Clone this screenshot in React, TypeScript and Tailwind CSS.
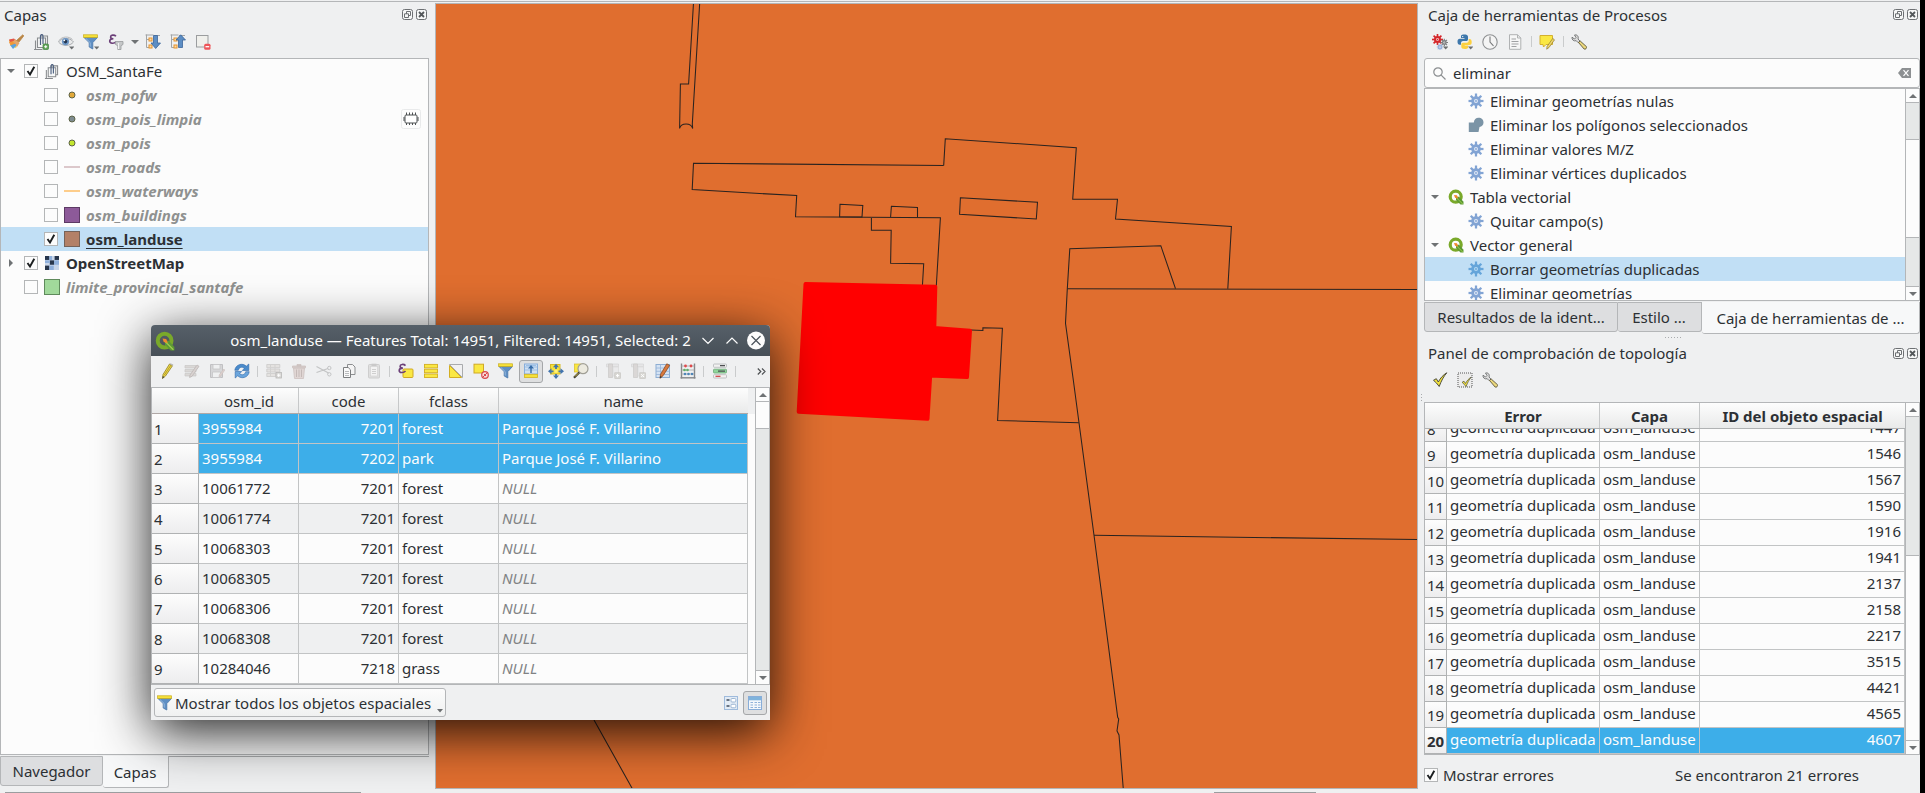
import React, { ReactNode } from "react";

/* ---------- icon primitives ---------- */

function Ico({ children, size = 16, className = "" }: { children: ReactNode; size?: number; className?: string }) {
  return (
    <svg viewBox="0 0 16 16" width={size} height={size} className={`shrink-0 ${className}`}>
      {children}
    </svg>
  );
}

const DropMark = () => <path d="M11 12.6h5.4L13.7 15.4z" fill="#6b6e70" />;

const funnelShape = (
  <g>
    <path d="M1 3.5h13.5L9.8 8.6V15L6.2 13V8.6z" fill="#5f8fc4" stroke="#4876ab" strokeWidth=".8" />
    <path d="M2.8 4.4l4.4 4.2v4" stroke="#9dbde0" fill="none" strokeWidth=".9" />
    <rect x=".6" y=".8" width="14" height="2.6" fill="#f6e13a" stroke="#c9ad1c" strokeWidth=".7" />
  </g>
);

const pagesShape = (color: string) => (
  <g fill="none" stroke={color} strokeWidth="1.1">
    <path d="M7.5 4V2h7v9.5h-2" />
    <path d="M4.5 4h8v9.5h-8z" fill="#f6f7f7" />
    <path d="M2.5 6.500v9h7M1 15.500h2" />
    <path d="M7.5 11V2.500c0-2.600 2.500-2.600 2.500 0V10" stroke="#4b5f80" strokeWidth="1.2" />
  </g>
);

const StyleIcon = () => (
  <Ico>
    <path d="M1 6l5-1 3 3-1 6-5-2z" fill="#f6d638" />
    <path d="M1 5.500l5-1 2 2-6 2z" fill="#e2554b" />
    <path d="M2 11l6-3 1 3-4 4z" fill="#5aa2dd" />
    <path d="M1 8l7-1 .5 2-6 2.500z" fill="#f19a36" />
    <path d="M7 5l4.500 4-2.800 4.500C8 10 7 9 4.800 8z" fill="#e4a66a" />
    <path d="M8.500 6.500L14.800.8l1 1L11 8z" fill="#b98545" stroke="#b98545" strokeWidth=".8" />
  </Ico>
);
const AddGroupIcon = () => (
  <Ico>
    {pagesShape("#8a8d90")}
    <rect x="10" y="10" width="5.500" height="5.500" rx="1" fill="#5fa257" stroke="#3f8440" strokeWidth=".7" />
    <path d="M12.750 11.200v3M11.200 12.750h3" stroke="#fff" strokeWidth="1" />
  </Ico>
);
const EyeIcon = () => (
  <Ico>
    <path d="M.5 8C3 3.500 12 3 15.500 8 12 12.500 4 12.500.5 8z" fill="#e9eaeb" stroke="#a7aaad" />
    <path d="M1 6.500C4 2.200 11 2 14.500 5.500" stroke="#b7b9bb" fill="none" />
    <circle cx="7.500" cy="7.600" r="3.600" fill="#6c95c4" />
    <circle cx="7.500" cy="7.600" r="1.800" fill="#25364f" />
    <circle cx="6.300" cy="6.300" r=".9" fill="#fff" />
    <DropMark />
  </Ico>
);
const FilterDropIcon = () => (
  <Ico>
    {funnelShape}
    <DropMark />
  </Ico>
);
const FunnelIcon = () => <Ico>{funnelShape}</Ico>;

const epsilonPath = (
  <path
    d="M8 2.300C6.200.4 2.600.9 2.600 3c0 1.500 1.500 1.800 2.800 1.800C3.600 4.800 1.700 5.300 1.700 7.100c0 2.600 4.500 2.800 6.300.6"
    fill="none"
    stroke="#6b3f78"
    strokeWidth="1.600"
  />
);
const EpsilonFilterIcon = () => (
  <Ico>
    {epsilonPath}
    <path d="M7.500 7.500h7.500v3l-2 1.200V15.500h-3.200v-3.800l-2.300-1.200z" fill="#c6c8c9" stroke="#989b9d" strokeWidth=".8" />
    <path d="M10.500 9v6" stroke="#f2f2f2" />
  </Ico>
);

const treeBits = (
  <g>
    <path d="M1.500.5v13M1.500 5.500h3M1.500 13.500h3M.5 1h8M9 1.500h6" stroke="#a2a5a7" fill="none" />
    <rect x="4" y="4" width="3" height="3" fill="#fbd9a4" stroke="#e8942c" />
    <rect x="4" y="11" width="3" height="3" fill="#fbd9a4" stroke="#e8942c" />
  </g>
);
const ExpandIcon = () => (
  <Ico>
    {treeBits}
    <path d="M8.500 1.500h4v7.500h3L10.700 14.500 6 9h2.500z" fill="#5c8dc3" stroke="#3a659b" strokeWidth=".8" />
  </Ico>
);
const CollapseIcon = () => (
  <Ico>
    {treeBits}
    <path d="M8.500 13.500h4V6h3L10.700.8 6 6h2.500z" fill="#5c8dc3" stroke="#3a659b" strokeWidth=".8" />
  </Ico>
);
const RemoveLayerIcon = () => (
  <Ico>
    <rect x="1.500" y="1.500" width="11.500" height="11.500" fill="#f0f0ec" stroke="#9b9d9f" />
    <rect x="9.200" y="9.700" width="6.300" height="6" rx="1.500" fill="#ee5559" />
    <path d="M10.500 12.700h3.700" stroke="#fff" strokeWidth="1.300" />
  </Ico>
);

const PencilIcon = () => (
  <Ico>
    <path d="M10.500 1l3 1.700L6.500 13l-3 2.500.5-4z" fill="#eedc4c" stroke="#8f7d22" strokeWidth=".8" />
    <path d="M12 2L5.200 12.300" stroke="#b89d24" />
    <path d="M10.500 1l3 1.700.8-1.200L11.500.2z" fill="#b9b9b9" />
    <path d="M3.200 15.800l.6-2.800 1.700 1z" fill="#444" />
  </Ico>
);
const EditRowsIcon = () => (
  <Ico>
    <path d="M1 2.500h11v2.500H1zM1 6.500h11V9H1zM1 10.500h11V13H1z" fill="#dad8d6" stroke="#c9c7c5" strokeWidth=".7" />
    <path d="M13 2l2 1.300-7 10-2.400 1.200.4-2.500z" fill="#d9d2d0" stroke="#bdb8b6" strokeWidth=".8" />
  </Ico>
);
const SaveIcon = () => (
  <Ico>
    <path d="M1.500 1.500h12v13h-12z" fill="#d6d6d8" stroke="#c0c0c2" />
    <path d="M4 1.500h7V6H4zM3.500 9h8v5.500h-8z" fill="#eff0f1" stroke="#c5c5c7" strokeWidth=".8" />
    <path d="M14.800 6l1 1-4 6-1.800.8.3-2z" fill="#ddd0cd" stroke="#c9bfbd" strokeWidth=".6" />
  </Ico>
);
const ReloadIcon = () => (
  <Ico>
    <path d="M.8 7.300C1.500 1.500 8.500-.6 12.300 3.200L14.800 1v6.500H8.300l2-2.100C8.200 3.300 5 4.200 4.300 7.300z" fill="#4a8bcb" stroke="#2d68ab" strokeWidth=".6" />
    <path d="M15.200 8.700C14.500 14.500 7.500 16.600 3.700 12.800L1.200 15V8.500h6.500l-2 2.100c2.100 2.100 5.300 1.200 6-1.900z" fill="#6ba5dc" stroke="#2d68ab" strokeWidth=".6" />
  </Ico>
);
const AddRowIcon = () => (
  <Ico>
    <path d="M.8 1.500h13v3.200H.8zM.8 6h13v3H.8zM.8 10.500h9v3h-9z" fill="#e4e2e0" stroke="#cbcac9" strokeWidth=".8" />
    <path d="M4.500 1.500v12M9 1.500v8" stroke="#d3d2d1" />
    <rect x="10" y="9.500" width="5.500" height="5.500" fill="#d9d8d6" stroke="#b9b8b7" strokeWidth=".8" />
    <path d="M12.700 10.700v3.200M11.200 12.200h3.200" stroke="#fff" />
  </Ico>
);
const TrashIcon = () => (
  <Ico>
    <path d="M2.500 5h11l-1 10.500h-9z" fill="#e0d6d4" stroke="#cdc2c0" strokeWidth=".8" />
    <path d="M1.500 3h13v1.800h-13zM6 1.500h4V3H6z" fill="#d8cbc9" stroke="#c9bebc" strokeWidth=".7" />
    <path d="M5.500 6.500v7.500M8 6.500v7.500M10.500 6.500v7.500" stroke="#c5bab8" />
  </Ico>
);
const CutIcon = () => (
  <Ico>
    <path d="M.5 3.500l12 6.500M.5 9.500l11.500-4" stroke="#c3c4c5" strokeWidth="1.200" />
    <circle cx="13.300" cy="5" r="1.700" fill="none" stroke="#c3c4c5" />
    <circle cx="13.300" cy="11.300" r="1.700" fill="none" stroke="#c3c4c5" />
  </Ico>
);
const CopyIcon = () => (
  <Ico>
    <path d="M6.500 1.500h5l2.500 2.500v7.500H6.500z" fill="#f4f4f4" stroke="#8c8e90" />
    <path d="M2.500 4.500h4.700l2.300 2.300v7.700h-7z" fill="#fafafa" stroke="#7c7e80" />
    <path d="M4 8.500h4M4 10.500h4M4 12.500h4" stroke="#b9bbbd" />
  </Ico>
);
const PasteIcon = () => (
  <Ico>
    <rect x="2.500" y="1.500" width="11" height="13.500" rx="1" fill="#dfdfdf" stroke="#cecece" />
    <rect x="4.500" y="3.500" width="7" height="9.500" fill="#f3f3f3" stroke="#d3d3d3" strokeWidth=".7" />
    <path d="M6 6.500h4M6 8.500h4M6 10.500h4" stroke="#cfcfcf" />
    <rect x="5.500" y=".7" width="5" height="2.300" fill="#c9c9c9" />
  </Ico>
);
const SelectExprIcon = () => (
  <Ico>
    <rect x="5" y="6" width="10" height="8.500" rx="1" fill="#fae843" stroke="#d0a925" />
    <g transform="translate(-.5 .3)">{epsilonPath}</g>
  </Ico>
);
const SelectAllIcon = () => (
  <Ico>
    <g fill="#fae843" stroke="#d3ae22" strokeWidth=".9">
      <rect x="1.500" y="1.400" width="13" height="3.500" />
      <rect x="1.500" y="6.200" width="13" height="3.500" />
      <rect x="1.500" y="11" width="13" height="3.500" />
    </g>
  </Ico>
);
const InvertIcon = () => (
  <Ico>
    <path d="M1.500 1.500h13v13z" fill="#f1f1f2" stroke="#a9abad" />
    <path d="M1.500 2.500l12 12h-12z" fill="#fae843" stroke="#d3ae22" />
  </Ico>
);
const DeselectIcon = () => (
  <Ico>
    <rect x="1" y="1.200" width="9.500" height="8.800" fill="#fae843" stroke="#d0a925" />
    <circle cx="12" cy="12" r="3.300" fill="#f8d9d9" stroke="#d9494b" strokeWidth="1.200" />
    <path d="M9.800 14.200l4.400-4.400M11 11l2 2" stroke="#d9494b" strokeWidth="1" />
  </Ico>
);
const MoveTopIcon = () => (
  <Ico>
    <rect x="1.500" y="1" width="13" height="10" fill="#cfe0f3" stroke="#88aedb" />
    <path d="M2 4h12M2 7h12M3 2.500h10" stroke="#9dbfe4" />
    <path d="M7.300 10V5.500H5L8 2l3 3.500H8.700V10z" fill="#356ba8" />
    <rect x="1.500" y="11.300" width="13" height="3.200" fill="#f5e13b" stroke="#d3b31f" strokeWidth=".8" />
  </Ico>
);
const PanIcon = () => (
  <Ico>
    <rect x="2.500" y="1.500" width="9.500" height="9.500" fill="#f6e13b" stroke="#d9bb26" />
    <g fill="#4274ad">
      <path d="M8 16l-3-3.500h6zM16 8.300l-3.500 3V5.300zM0 8.300l3.500 3V5.300z" />
      <path d="M8 .8L5 4.300h6z" />
    </g>
    <path d="M8 3.500v2.500M8 11v2M3 8.300h2.500M10.500 8.300H13" stroke="#4274ad" strokeWidth="1.800" />
    <rect x="6.500" y="6.800" width="3" height="3" fill="#fff27a" />
  </Ico>
);
const ZoomSelIcon = () => (
  <Ico>
    <rect x="1.500" y="1" width="7" height="8" fill="#fae843" stroke="#d9bb26" strokeWidth=".7" />
    <circle cx="10" cy="5.700" r="5" fill="#eceadf" stroke="#a09f96" strokeWidth="1.200" />
    <path d="M6.200 9.500L1 14.800" stroke="#3c3a30" strokeWidth="2.200" />
    <path d="M5.300 10.200L2 13.500" stroke="#d9c14d" strokeWidth="1" />
  </Ico>
);
const ColumnOffIcon = ({ remove = false }: { remove?: boolean }) => (
  <Ico>
    <path d="M1.500 1h12v2.800h-12z" fill="#e6e6e7" stroke="#d4d4d5" strokeWidth=".7" />
    <path d="M3.500 1h4v13.500h-4z" fill="#dad7d6" stroke="#cac8c7" strokeWidth=".7" />
    <path d="M8 4h5.500v9H8z" fill="#eaeaeb" stroke="#d8d8d9" strokeWidth=".7" />
    <rect x="9.800" y="9.800" width="5.500" height="5.500" fill="#dad9d5" stroke="#c3c2be" strokeWidth=".7" />
    <path d={remove ? "M11.200 11.200l2.800 2.800M14 11.200l-2.800 2.800" : "M12.500 11v3.200M11 12.600h3.200"} stroke="#fff" />
  </Ico>
);
const TableEditIcon = () => (
  <Ico>
    <rect x="1" y="1.500" width="13.500" height="13" fill="#d5e3f3" stroke="#8eaed3" />
    <path d="M1 5h13.500M1 8.300h13.500M1 11.500h13.500M5.500 1.500v13" stroke="#94b3d8" strokeWidth=".8" />
    <path d="M11.800.8l2.800 1.600L8 12.800l-3 2.400.5-3.800z" fill="#d9793d" stroke="#8a4a22" strokeWidth=".8" />
    <path d="M4.800 15.500l.5-2.500 1.500.9z" fill="#333" />
  </Ico>
);
const AbacusIcon = () => (
  <Ico>
    <path d="M1.500.5v15M14.500.5v15" stroke="#858789" strokeWidth="1.400" />
    <path d="M1.500 3h13M1.500 7h13M1.500 11h13" stroke="#a3a5a7" strokeWidth=".8" />
    <path d="M.5 14.800h15" stroke="#858789" strokeWidth="1.400" />
    <g fill="#de4a4c">
      <circle cx="5.500" cy="3" r="1.400" />
      <circle cx="11" cy="3" r="1.400" />
    </g>
    <g fill="#5fae6a">
      <circle cx="4.500" cy="7" r="1.300" />
      <circle cx="7.500" cy="7" r="1.300" />
    </g>
    <g fill="#4f86b8">
      <circle cx="5" cy="11" r="1.300" />
      <circle cx="8.500" cy="11" r="1.300" />
      <circle cx="12" cy="11" r="1.300" />
    </g>
  </Ico>
);
const CondFormatIcon = () => (
  <Ico>
    <rect x="1.500" y="1" width="13" height="3.300" rx=".8" fill="#f1f1f1" stroke="#b3b5b7" strokeWidth=".8" />
    <rect x="1.500" y="6.200" width="13" height="3.800" rx=".8" fill="#8fd49a" stroke="#6cab77" strokeWidth=".8" />
    <rect x="1.500" y="11.700" width="13" height="3.300" rx=".8" fill="#f6f1f1" stroke="#b3b5b7" strokeWidth=".8" />
    <path d="M8 2.700h5M6 8.100h7" stroke="#4d5052" strokeWidth="1.200" />
    <path d="M3.500 13.300h5" stroke="#cf3d3f" strokeWidth="1.200" />
  </Ico>
);
const FormViewIcon = () => (
  <Ico>
    <rect x="1.500" y="1.500" width="13" height="13" fill="#e2ebf5" stroke="#9fbbdc" />
    <path d="M3.500 5h3M3.500 11h3" stroke="#3f4d5f" strokeWidth="1.300" />
    <rect x="8" y="3.500" width="4.800" height="3.500" rx="1" fill="#fff" stroke="#9db6d3" />
    <rect x="8" y="9.300" width="4.800" height="3.500" rx="1" fill="#fff" stroke="#9db6d3" />
  </Ico>
);
const TableViewIcon = () => (
  <Ico>
    <rect x="1.500" y="1.500" width="13" height="13" fill="#f3f7fb" stroke="#88add8" />
    <rect x="2" y="2" width="12" height="3.300" fill="#7fb3dc" />
    <path d="M3.500 7.500h2.500M3.500 10h2.500M3.500 12.500h2.500M7.500 7.500h2.500M7.500 10h2.500M7.500 12.500h2.500M11 7.500h2.500M11 10h2.500M11 12.500h2.500" stroke="#8fb2da" strokeWidth="1.100" />
  </Ico>
);

const teeth = [0, 45, 90, 135, 180, 225, 270, 315];
function gearShape(cx: number, cy: number, r: number, color: string, hole: string) {
  return (
    <g>
      {teeth.map((a) => (
        <path
          key={a}
          d={`M${cx} ${cy - r * 0.5}V${cy - r}`}
          stroke={color}
          strokeWidth={r * 0.3}
          transform={`rotate(${a} ${cx} ${cy})`}
        />
      ))}
      <circle cx={cx} cy={cy} r={r * 0.64} fill={color} />
      <circle cx={cx} cy={cy} r={r * 0.27} fill={hole} />
      <circle cx={cx} cy={cy} r={r * 0.12} fill={color} />
    </g>
  );
}
const GearIcon = ({ selected = false }: { selected?: boolean }) => (
  <Ico>{gearShape(8, 8, 7.500, selected ? "#65a5da" : "#82a4d4", selected ? "#b5daf3" : "#dfe8f5")}</Ico>
);
const PolygonIcon = () => (
  <Ico>
    <path d="M.8 5.500h5C6 2.500 8 .8 10.500.8c3 0 5 2 5 4.800 0 2.500-1.700 4.200-4 4.500l-1 4.900H.8z" fill="#7b94a6" />
  </Ico>
);
const GearsIcon = () => (
  <Ico>
    {gearShape(5.500, 5.500, 5.500, "#d4272b", "#f3c5c5")}
    {gearShape(12.300, 8.500, 3.800, "#7b7d7f", "#e0e0e0")}
    {gearShape(8, 13, 3.200, "#8faad8", "#e8edf6")}
    <DropMark />
  </Ico>
);
const PythonIcon = () => (
  <Ico>
    <path d="M7 .5c-3 0-3 1.200-3 2.300V4h3.500v.7H2.800C1 4.700.5 6 .5 7.800s.8 3 2.200 3H4V9c0-1.200 1-2 2-2h3.300c1 0 1.700-.8 1.700-1.800V2.800C11 1 9.500.5 7 .5z" fill="#3d77ab" />
    <path d="M8 15c3 0 3.200-1 3.200-2.200v-1.200H7.700v-.7h4.800c1.700 0 2.200-1.300 2.200-3s-.8-2.800-2.200-2.800h-.8v1.700c0 1.200-1 2-2 2H6c-1 0-1.700.8-1.700 1.800v2.200C4.300 14.500 5.500 15 8 15z" fill="#fcd03f" />
    <circle cx="5.700" cy="2.600" r=".7" fill="#fff" />
    <DropMark />
  </Ico>
);
const ClockIcon = () => (
  <Ico>
    <circle cx="8" cy="8" r="7.200" fill="#f4f4f4" stroke="#8f9193" strokeWidth="1.100" />
    <path d="M8 2.500V8l3.500 3.800" stroke="#77797b" fill="none" strokeWidth="1.100" />
  </Ico>
);
const DocIcon = () => (
  <Ico>
    <path d="M2.500.7h8l3.300 3.300v11.300H2.500z" fill="#f6f6f6" stroke="#b0b2b3" />
    <path d="M10.500.7V4h3.300" fill="none" stroke="#b0b2b3" />
    <path d="M4.500 5h4.500M4.500 7.500h7M4.500 10h7M4.500 12.500h5" stroke="#9fa1a3" />
  </Ico>
);
const NoteEditIcon = () => (
  <Ico>
    <path d="M1 1.500h12.500v9H7L4.500 13l-.5-2.500H1z" fill="#fae843" stroke="#d3b031" />
    <path d="M13.700 4.500l1.800 1.300L10 13.500l-2.300 1.700.4-2.800z" fill="#efd56a" stroke="#8e7a2e" strokeWidth=".7" />
  </Ico>
);
const WrenchIcon = () => (
  <Ico>
    <path d="M1 3.200L3.500 5 5 3.500 3.500 1C6 .3 8 2.500 7 5l2 2-1.800 1.700-2-2C3 7.500.5 5.800 1 3.200z" fill="#dcdcdc" stroke="#6d6f70" strokeWidth=".9" />
    <path d="M7.500 8.500L9.200 7l6.300 5.700c.8 1.200-1.200 3.200-2.400 2.300z" fill="#ecd87c" stroke="#5c563a" strokeWidth=".9" />
  </Ico>
);
const checkShape = (
  <path d="M1.500 8.300l2.800-1.600 2 3.300C8.500 6 11 3 14.800.8 11.500 4.500 9.300 9 7.200 14.500 5.500 12 3.700 10 1.500 8.300z" fill="#f4e43c" stroke="#3d3d33" strokeWidth=".9" />
);
const ValidateIcon = () => <Ico>{checkShape}</Ico>;
const ValidateExtentIcon = () => (
  <Ico>
    <rect x="1" y="1" width="14" height="14" fill="#ececec" stroke="#555" strokeWidth="1" strokeDasharray="1 1" />
    <g transform="translate(4 4.500) scale(.7)">{checkShape}</g>
  </Ico>
);
const QgisIcon = ({ size = 16 }: { size?: number }) => (
  <Ico size={size}>
    <circle cx="7.700" cy="7.700" r="5.500" fill="none" stroke="#7aa92a" strokeWidth="3.200" />
    <path d="M8 7.800h3l4.500 5v2.700h-3L8 11z" fill="#5d9a34" />
    <path d="M8.200 8.500l6.500 6.500" stroke="#a5cf4f" strokeWidth=".9" />
    <path d="M6 6l3 .3L10.300 9.800 7 8.800z" fill="#f08a2c" />
  </Ico>
);
const RasterIcon = () => (
  <Ico size={14}>
    <rect x="0" y="0" width="16" height="16" fill="#c8d6ea" />
    <g fill="#27364c">
      <rect x="0" y="0" width="5" height="4.500" />
      <rect x="11" y="0" width="5" height="4.500" />
      <rect x="5.500" y="5" width="5" height="5" />
      <rect x="0" y="11" width="5" height="5" />
    </g>
    <g fill="#8fb0dc">
      <rect x="5" y="0" width="3" height="4.500" />
      <rect x="0" y="5" width="5.500" height="3" />
      <rect x="10.500" y="5" width="5.500" height="5" />
      <rect x="5" y="11" width="5" height="5" />
    </g>
  </Ico>
);
const MemoryIcon = () => (
  <svg viewBox="0 0 20 20" width="20" height="20" className="shrink-0">
    <rect x=".5" y=".5" width="19" height="19" rx="2" fill="#fdfdfd" stroke="#e9eaeb" />
    <rect x="4" y="6" width="12" height="8" rx="1" fill="#fff" stroke="#4d5052" />
    <path d="M3 8v4M17 8v4M5.500 6V3.500M8.500 6V3.500M11.500 6V3.500M14.500 6V3.500M5.500 14v2M8.500 14v2M11.500 14v2M14.500 14v2" stroke="#4d5052" />
  </svg>
);

/* ---------- shared widgets ---------- */

const Slot = ({ children }: { children: ReactNode }) => (
  <div className="flex w-[25px] shrink-0 justify-center">{children}</div>
);
const Sep = () => (
  <div className="flex w-[7px] shrink-0 justify-center">
    <div className="h-[11px] w-px bg-[#c9cbcc]" />
  </div>
);

const DockButtons = () => (
  <div className="flex gap-[3px]">
    <svg width="11" height="11" viewBox="0 0 11 11">
      <rect x=".5" y=".5" width="10" height="10" rx="2" fill="#f6f7f7" stroke="#6d7073" />
      <path d="M4.500 5V2.500h4v4H6.500M2.500 4.800h4v3.700h-4z" fill="none" stroke="#6d7073" />
    </svg>
    <svg width="11" height="11" viewBox="0 0 11 11">
      <rect x=".5" y=".5" width="10" height="10" rx="2" fill="#f6f7f7" stroke="#6d7073" />
      <path d="M3 3l5 5M8 3L3 8" stroke="#53575a" strokeWidth="1.800" />
    </svg>
  </div>
);

const Check = ({ on }: { on?: boolean }) => (
  <div className="h-[14px] w-[14px] shrink-0 border border-[#b4b6b7] bg-[#fcfcfc]">
    {on && (
      <svg viewBox="0 0 12 12" width="12" height="12">
        <path d="M2.500 6l2.500 3.500L9.300 1.800" fill="none" stroke="#1b1e20" strokeWidth="1.900" />
      </svg>
    )}
  </div>
);

const Arrow = ({ dir }: { dir: "up" | "down" | "right" }) => (
  <svg width="8" height="8" viewBox="0 0 8 8" className="shrink-0">
    <path d={dir === "up" ? "M0 6h8L4 2z" : dir === "down" ? "M0 2h8L4 6z" : "M2 0v8l4-4z"} fill="#6f7274" />
  </svg>
);

/* ---------- layers panel ---------- */

const dot = (c: string) => (
  <Ico>
    <circle cx="8" cy="8" r="3" fill={c} stroke="#5d6348" strokeWidth="1" />
  </Ico>
);
const line = (c: string) => <div className="h-[2px] w-4 shrink-0" style={{ background: c }} />;
const fill = (c: string, b: string) => <div className="h-4 w-4 shrink-0 border" style={{ background: c, borderColor: b }} />;

const layers: { name: string; icon: ReactNode; on?: boolean; memory?: boolean }[] = [
  { name: "osm_pofw", icon: dot("#e2a93a") },
  { name: "osm_pois_limpia", icon: dot("#7d8b8f"), memory: true },
  { name: "osm_pois", icon: dot("#c3e62e") },
  { name: "osm_roads", icon: line("#dcc8cb") },
  { name: "osm_waterways", icon: line("#fdcd8b") },
  { name: "osm_buildings", icon: fill("#8d5a99", "#5c3a64") },
  { name: "osm_landuse", icon: fill("#b38168", "#75635a"), on: true },
];

function LayersPanel() {
  return (
    <aside className="flex h-full w-[435px] shrink-0 flex-col">
      <div className="flex h-[22px] items-center justify-between pr-[8px] pl-[4px]">
        <span className="pt-[2px]">Capas</span>
        <DockButtons />
      </div>
      <div className="flex h-[33px] items-center pl-[3.5px]">
        <Slot><StyleIcon /></Slot>
        <Slot><AddGroupIcon /></Slot>
        <Slot><EyeIcon /></Slot>
        <Slot><FilterDropIcon /></Slot>
        <Slot><EpsilonFilterIcon /></Slot>
        <div className="flex w-[12px] justify-center"><Arrow dir="down" /></div>
        <Slot><ExpandIcon /></Slot>
        <Slot><CollapseIcon /></Slot>
        <Slot><RemoveLayerIcon /></Slot>
      </div>
      <div className="h-[697px] w-[429px] border border-[#b4b6b8] bg-[#fcfcfc] leading-[24px]">
        <div className="flex h-6 items-center pl-[6px]">
          <Arrow dir="down" />
          <div className="ml-[9px]"><Check on /></div>
          <Ico size={15} className="ml-[6px]">{pagesShape("#86898c")}</Ico>
          <span className="ml-[7px]">OSM_SantaFe</span>
        </div>
        {layers.map((l) => (
          <div key={l.name} className={`flex h-6 items-center pl-[43px] pr-[7px] ${l.on ? "bg-[#c1dff5]" : ""}`}>
            <Check on={l.on} />
            <div className="ml-[6px] flex w-[22px]">{l.icon}</div>
            <span className={l.on ? "font-bold underline decoration-1 underline-offset-[3px]" : "font-bold text-[#8f9190] italic"}>{l.name}</span>
            {l.memory && <div className="ml-auto"><MemoryIcon /></div>}
          </div>
        ))}
        <div className="flex h-6 items-center pl-[6px]">
          <Arrow dir="right" />
          <div className="ml-[9px]"><Check on /></div>
          <div className="ml-[7px]"><RasterIcon /></div>
          <span className="ml-[7px] font-bold">OpenStreetMap</span>
        </div>
        <div className="flex h-6 items-center pl-[23px]">
          <Check />
          <div className="ml-[6px]">{fill("#a1d99b", "#5f8a5c")}</div>
          <span className="ml-[6px] font-bold text-[#8f9190] italic">limite_provincial_santafe</span>
        </div>
      </div>
      <div className="mt-[1px] flex w-[429px]">
        <div className="h-[30px] w-[103px] rounded-b-[3px] border border-[#b4b6b8] bg-[#dddee0] text-center leading-[29px]">Navegador</div>
        <div className="h-[32px] w-[66px] rounded-b-[3px] border border-t-0 border-l-0 border-[#b4b6b8] bg-[#f7f8f9] pr-px text-center leading-[33px]">Capas</div>
        <div className="h-px flex-1 bg-[#a9abad]" />
      </div>
      <div className="mt-auto ml-[5px] h-px w-[356px] bg-[#9b9d9f]" />
    </aside>
  );
}

/* ---------- map canvas ---------- */

function MapCanvas() {
  return (
    <main className="flex h-full w-[983px] shrink-0 flex-col">
      <svg viewBox="436 4 981 784" width="983" height="786" className="border border-[#b4b6b8]">
        <rect x="435" y="3" width="983" height="786" fill="#e06e2f" />
        <g fill="none" stroke="#2a2320" strokeWidth="1.050">
          <path d="M693.500 3L688.600 84H680.400L679.600 128.500C681 122.500 691 122.500 692.700 128.500L692.300 124L699.700 3" />
          <path d="M943.700 165.400L693.500 163.300L692.200 189.600L796.700 195.600L795.500 216.700L940.400 217.700L936.300 286" />
          <path d="M943.700 165.400L945.300 138.700L1076.300 147.700L1072.700 199.300H1117.500L1115.500 219L1231.400 226.500L1227.800 288.700" />
          <path d="M840 204.300L862.800 205.600L862 217L839.600 216.700zM890.600 217L891.400 206.300L917.500 207.600V217.300" />
          <path d="M960.400 197.700L1037.500 202.300L1036.300 219L959.600 214.300z" />
          <path d="M871.400 218V230.300H891.200L890.600 263.300L923.700 263.700L922.400 286" />
          <path d="M971 330L982.900 330.400V327.700L1002.400 328.300L997.600 420.400L1078.800 422.700" />
          <path d="M1175.500 288.700L1160.800 245.700L1069.800 248.700L1067.300 288.700L1065.500 323.300L1073.300 380L1094 535.300L1117.700 717.300L1118.700 719L1117 731L1119 735L1123.300 789" />
          <path d="M1067.300 288.800L1418 289.500M1094 535.300L1418 539.600M594 720L632.500 789" />
        </g>
        <path
          d="M805.500 284L935.300 286.800L934.300 328L970 330.700L967 377L930.200 375.500L927.500 418.800L798.700 411.800z"
          fill="#f00"
          stroke="#f00"
          strokeWidth="4"
          strokeLinejoin="round"
        />
      </svg>
      <div className="mt-auto ml-[779px] h-px w-[102px] bg-[#9b9d9f]" />
    </main>
  );
}

/* ---------- processing toolbox and topology panel ---------- */

type TreeRow = { kind: "alg" | "poly" | "group"; name: string; selected?: boolean };
const algorithms: TreeRow[] = [
  { kind: "alg", name: "Eliminar geometrías nulas" },
  { kind: "poly", name: "Eliminar los polígonos seleccionados" },
  { kind: "alg", name: "Eliminar valores M/Z" },
  { kind: "alg", name: "Eliminar vértices duplicados" },
  { kind: "group", name: "Tabla vectorial" },
  { kind: "alg", name: "Quitar campo(s)" },
  { kind: "group", name: "Vector general" },
  { kind: "alg", name: "Borrar geometrías duplicadas", selected: true },
  { kind: "alg", name: "Eliminar geometrías" },
];

const errors: [number, number][] = [
  [8, 1447], [9, 1546], [10, 1567], [11, 1590], [12, 1916], [13, 1941], [14, 2137],
  [15, 2158], [16, 2217], [17, 3515], [18, 4421], [19, 4565], [20, 4607],
];

function RightPanels() {
  return (
    <aside className="flex h-full w-[502px] shrink-0 flex-col pl-[6px]">
      <div className="flex h-[22px] items-center justify-between pr-[2px] pl-[4px]">
        <span className="pt-[2px]">Caja de herramientas de Procesos</span>
        <DockButtons />
      </div>
      <div className="flex h-[33px] items-center pl-[3.5px]">
        <Slot><GearsIcon /></Slot>
        <Slot><PythonIcon /></Slot>
        <Slot><ClockIcon /></Slot>
        <Slot><DocIcon /></Slot>
        <Sep />
        <Slot><NoteEditIcon /></Slot>
        <Sep />
        <Slot><WrenchIcon /></Slot>
      </div>
      <div className="flex h-[30px] items-center rounded-[3px] border border-[#b4b6b8] bg-[#fcfcfc] pr-[8px] pl-[8px]">
        <svg width="13" height="13" viewBox="0 0 13 13" fill="none" stroke="#8b8e90" strokeWidth="1.200">
          <circle cx="5" cy="5" r="4.200" />
          <path d="M8.200 8.200l4.300 4.300" />
        </svg>
        <span className="ml-[7px] flex-1 leading-[28px]">eliminar</span>
        <svg width="13" height="10" viewBox="0 0 13 10">
          <path d="M0 5l4-5h9v10H4z" fill="#8d9092" />
          <path d="M5.500 2.200l5 5.600M10.500 2.200l-5 5.600" stroke="#fff" strokeWidth="1.200" />
        </svg>
      </div>
      <div className="flex h-[213px] border border-[#b4b6b8] bg-[#fcfcfc]">
        <div className="flex-1 overflow-hidden leading-[24px]">
          {algorithms.map((r) =>
            r.kind === "group" ? (
              <div key={r.name} className="flex h-6 items-center pl-[6px]">
                <Arrow dir="down" />
                <div className="ml-[9px]"><QgisIcon /></div>
                <span className="ml-[6px]">{r.name}</span>
              </div>
            ) : (
              <div key={r.name} className={`flex h-6 items-center pl-[43px] ${r.selected ? "bg-[#c1dff5]" : ""}`}>
                {r.kind === "poly" ? <PolygonIcon /> : <GearIcon selected={r.selected} />}
                <span className="ml-[6px]">{r.name}</span>
              </div>
            )
          )}
        </div>
        <div className="flex w-[14px] flex-col border-l border-[#b4b6b8]">
          <div className="flex h-[14px] items-center justify-center border-b border-[#b4b6b8]"><Arrow dir="up" /></div>
          <div className="h-[36px] bg-[#e6e8e8]" />
          <div className="h-[99px] border-y border-[#b4b6b8] bg-[#fcfcfc]" />
          <div className="flex-1 bg-[#e6e8e8]" />
          <div className="flex h-[14px] items-center justify-center border-t border-[#b4b6b8]"><Arrow dir="down" /></div>
        </div>
      </div>
      <div className="mt-[1px] flex">
        <div className="h-[30px] w-[194px] rounded-b-[3px] border border-[#b4b6b8] bg-[#dddee0] text-center leading-[29px]">Resultados de la ident...</div>
        <div className="h-[30px] w-[84px] rounded-b-[3px] border border-l-0 border-[#b4b6b8] bg-[#dddee0] pr-px text-center leading-[29px]">Estilo ...</div>
        <div className="h-[32px] w-[218px] rounded-b-[3px] border border-t-0 border-l-0 border-[#b4b6b8] bg-[#f7f8f9] text-center leading-[33px]">Caja de herramientas de ...</div>
      </div>
      <div className="mt-[3px] ml-[241px] h-px w-[17px] bg-[repeating-linear-gradient(90deg,#a9abad_0_1px,transparent_1px_3px)]" />
      <div className="mt-[4px] flex h-[22px] items-center justify-between pr-[2px] pl-[4px]">
        <span>Panel de comprobación de topología</span>
        <DockButtons />
      </div>
      <div className="mt-[2px] flex h-[28px] items-center pl-[3.5px]">
        <Slot><ValidateIcon /></Slot>
        <Slot><ValidateExtentIcon /></Slot>
        <Slot><WrenchIcon /></Slot>
      </div>
      <div className="-ml-[3px] h-[8px] w-px bg-[repeating-linear-gradient(180deg,#a9abad_0_1px,transparent_1px_3px)]" />
      <div className="flex h-[353px] border border-[#b4b6b8] bg-[#fcfcfc]">
        <div className="flex flex-1 flex-col overflow-hidden">
          <div className="flex h-[26px] shrink-0 border-b border-[#b0b2b3] bg-linear-to-b from-[#fdfdfd] to-[#e9eaea] text-center font-bold leading-[27px]">
            <div className="w-[175px] border-r border-[#c6c8c9] pl-[22px]">Error</div>
            <div className="w-[100px] border-r border-[#c6c8c9]">Capa</div>
            <div className="flex-1">ID del objeto espacial</div>
          </div>
          <div className="flex flex-1 flex-col justify-end overflow-hidden">
            {errors.map(([n, id]) => {
              const sel = n === 20;
              return (
                <div key={n} className="flex h-[26px] shrink-0 leading-[23px]">
                  <div className={`w-[22px] border-r border-b border-[#b0b2b3] bg-linear-to-b from-[#fdfdfd] to-[#ededee] pl-[2px] leading-[27px] ${sel ? "font-bold" : ""}`}>{n}</div>
                  <div className={`flex flex-1 border-b border-[#c2c4c5] ${sel ? "bg-[#3daee9] text-[#fcfcfc]" : ""}`}>
                    <div className="w-[153px] border-r border-[#c2c4c5] pl-[3px] whitespace-nowrap">geometría duplicada</div>
                    <div className="w-[100px] border-r border-[#c2c4c5] pl-[3px]">osm_landuse</div>
                    <div className="flex-1 border-r border-[#c2c4c5] pr-[3px] text-right">{id}</div>
                  </div>
                </div>
              );
            })}
          </div>
        </div>
        <div className="flex w-[14px] flex-col border-l border-[#b4b6b8]">
          <div className="flex h-[14px] items-center justify-center border-b border-[#b4b6b8]"><Arrow dir="up" /></div>
          <div className="h-[138px] bg-[#e6e8e8]" />
          <div className="flex-1 border-t border-[#b4b6b8] bg-[#fcfcfc]" />
          <div className="flex h-[14px] items-center justify-center border-t border-[#b4b6b8]"><Arrow dir="down" /></div>
        </div>
      </div>
      <div className="mt-[9px] flex h-[22px] items-center">
        <Check on />
        <span className="ml-[5px] w-[232px]">Mostrar errores</span>
        <span>Se encontraron 21 errores</span>
      </div>
    </aside>
  );
}

/* ---------- attribute table window ---------- */

const features: [string, string, string, string | null][] = [
  ["3955984", "7201", "forest", "Parque José F. Villarino"],
  ["3955984", "7202", "park", "Parque José F. Villarino"],
  ["10061772", "7201", "forest", null],
  ["10061774", "7201", "forest", null],
  ["10068303", "7201", "forest", null],
  ["10068305", "7201", "forest", null],
  ["10068306", "7201", "forest", null],
  ["10068308", "7201", "forest", null],
  ["10284046", "7218", "grass", null],
];

function AttributeWindow() {
  return (
    <section className="absolute top-[325px] left-[151px] flex h-[395px] w-[619px] flex-col rounded-t-[4px] bg-[#eff0f1] shadow-[0_12px_52px_rgba(0,0,0,0.88)]">
      <header className="flex h-[31px] shrink-0 items-center rounded-t-[4px] bg-linear-to-b from-[#566069] to-[#474f57] text-[#fcfcfc]">
        <div className="ml-[4px]"><QgisIcon size={20} /></div>
        <span className="flex-1 pl-[48px] text-center whitespace-nowrap">osm_landuse — Features Total: 14951, Filtered: 14951, Selected: 2</span>
        <svg width="72" height="20" viewBox="10 0 72 20" fill="none" stroke="#fcfcfc" strokeWidth="1.200" className="shrink-0">
          <path d="M14.500 7l5.500 5.500L25.500 7M38.500 12.500L44 7 49.500 12.500" />
          <circle cx="68" cy="9.500" r="9" fill="#fcfcfc" stroke="none" />
          <path d="M63.500 5l9 9M72.500 5l-9 9" stroke="#4a525a" strokeWidth="1.200" />
        </svg>
      </header>
      <div className="flex h-[31px] shrink-0 items-center pb-px pl-[3px]">
        <Slot><PencilIcon /></Slot>
        <Slot><EditRowsIcon /></Slot>
        <Slot><SaveIcon /></Slot>
        <Slot><ReloadIcon /></Slot>
        <Sep />
        <Slot><AddRowIcon /></Slot>
        <Slot><TrashIcon /></Slot>
        <Slot><CutIcon /></Slot>
        <Slot><CopyIcon /></Slot>
        <Slot><PasteIcon /></Slot>
        <Sep />
        <Slot><SelectExprIcon /></Slot>
        <Slot><SelectAllIcon /></Slot>
        <Slot><InvertIcon /></Slot>
        <Slot><DeselectIcon /></Slot>
        <Slot><FunnelIcon /></Slot>
        <Slot>
          <div className="flex h-[23px] w-[24px] items-center justify-center rounded-[3px] border border-[#a5a7a9] bg-[#dedfe0]"><MoveTopIcon /></div>
        </Slot>
        <Slot><PanIcon /></Slot>
        <Slot><ZoomSelIcon /></Slot>
        <Sep />
        <Slot><ColumnOffIcon /></Slot>
        <Slot><ColumnOffIcon remove /></Slot>
        <Slot><TableEditIcon /></Slot>
        <Slot><AbacusIcon /></Slot>
        <Sep />
        <Slot><CondFormatIcon /></Slot>
        <Sep />
        <svg width="9" height="7" viewBox="0 0 9 7" className="ml-[18px]" fill="none" stroke="#4d5052" strokeWidth="1.200">
          <path d="M.8.500l3 3-3 3M5 .5l3 3-3 3" />
        </svg>
      </div>
      <div className="flex h-[298px] shrink-0 border border-r-0 border-[#b4b6b8] bg-[#fcfcfc]">
        <div className="flex w-[603px] flex-col">
          <div className="flex h-[26px] shrink-0 bg-[#eff0f1]">
            <div className="flex w-[596px] border-b border-[#b0a8a6] bg-linear-to-b from-[#fdfdfd] to-[#e9eaea] text-center leading-[27px]">
              <div className="w-[147px] border-r border-[#c6c8c9] pl-[48px]">osm_id</div>
              <div className="w-[100px] border-r border-[#c6c8c9]">code</div>
              <div className="w-[100px] border-r border-[#c6c8c9]">fclass</div>
              <div className="flex-1">name</div>
            </div>
          </div>
          {features.map(([id, code, fclass, name], i) => (
            <div key={i} className="flex h-[30px] w-[596px] shrink-0 leading-[29px]">
              <div className="w-[47px] border-r border-b border-[#b0b2b3] bg-linear-to-b from-[#fdfdfd] to-[#ededee] pl-[2px] leading-[31px]">{i + 1}</div>
              <div className={`flex flex-1 border-b border-[#c2c4c5] ${i < 2 ? "bg-[#3daee9] text-[#fcfcfc]" : i % 2 ? "bg-[#eff0f1]" : "bg-[#fcfcfc]"}`}>
                <div className="w-[100px] border-r border-[#c2c4c5] pl-[3px]">{id}</div>
                <div className="w-[100px] border-r border-[#c2c4c5] pr-[3px] text-right">{code}</div>
                <div className="w-[100px] border-r border-[#c2c4c5] pl-[3px]">{fclass}</div>
                <div className={`flex-1 border-r border-[#c2c4c5] pl-[3px] ${name ? "" : "text-[#808284] italic"}`}>{name ?? "NULL"}</div>
              </div>
            </div>
          ))}
        </div>
        <div className="flex w-[15px] flex-col border-x border-[#b4b6b8]">
          <div className="flex h-[14px] items-center justify-center border-b border-[#b4b6b8]"><Arrow dir="up" /></div>
          <div className="h-[27px] border-b border-[#b4b6b8] bg-[#fcfcfc]" />
          <div className="flex-1 bg-[#e6e8e8]" />
          <div className="flex h-[14px] items-center justify-center border-t border-[#b4b6b8]"><Arrow dir="down" /></div>
        </div>
      </div>
      <footer className="flex flex-1 items-center pr-[3px] pl-[3px]">
        <div className="flex h-[29px] w-[292px] items-center rounded-[3px] border border-[#b4b6b8] bg-linear-to-b from-[#fcfcfc] to-[#f0f1f1] pl-[2px]">
          <FunnelIcon />
          <span className="ml-[2px] pt-[2px]">Mostrar todos los objetos espaciales</span>
          <svg width="6" height="4" viewBox="0 0 6 4" className="mt-[17px] ml-auto mr-[2px]"><path d="M0 0h6L3 3.500z" fill="#6b6e70" /></svg>
        </div>
        <div className="ml-auto flex items-center gap-[4px]">
          <FormViewIcon />
          <div className="flex h-[24px] w-[24px] items-center justify-center rounded-[3px] border border-[#a5a7a9] bg-[#dedfe0]"><TableViewIcon /></div>
        </div>
      </footer>
    </section>
  );
}

export default function App() {
  return (
    <div className="relative h-[793px] w-[1925px] overflow-hidden bg-[#eff0f1] font-['Noto_Sans',sans-serif] text-[15px] text-[#2c3034]">
      <div className="flex h-[3px] flex-col pt-px">
        <div className="h-px w-[1920px] bg-[#b4b6b8]" />
      </div>
      <div className="flex h-[790px]">
        <LayersPanel />
        <MapCanvas />
        <RightPanels />
        <div className="-mt-[3px] h-[793px] w-[5px] bg-black" />
      </div>
      <AttributeWindow />
    </div>
  );
}
